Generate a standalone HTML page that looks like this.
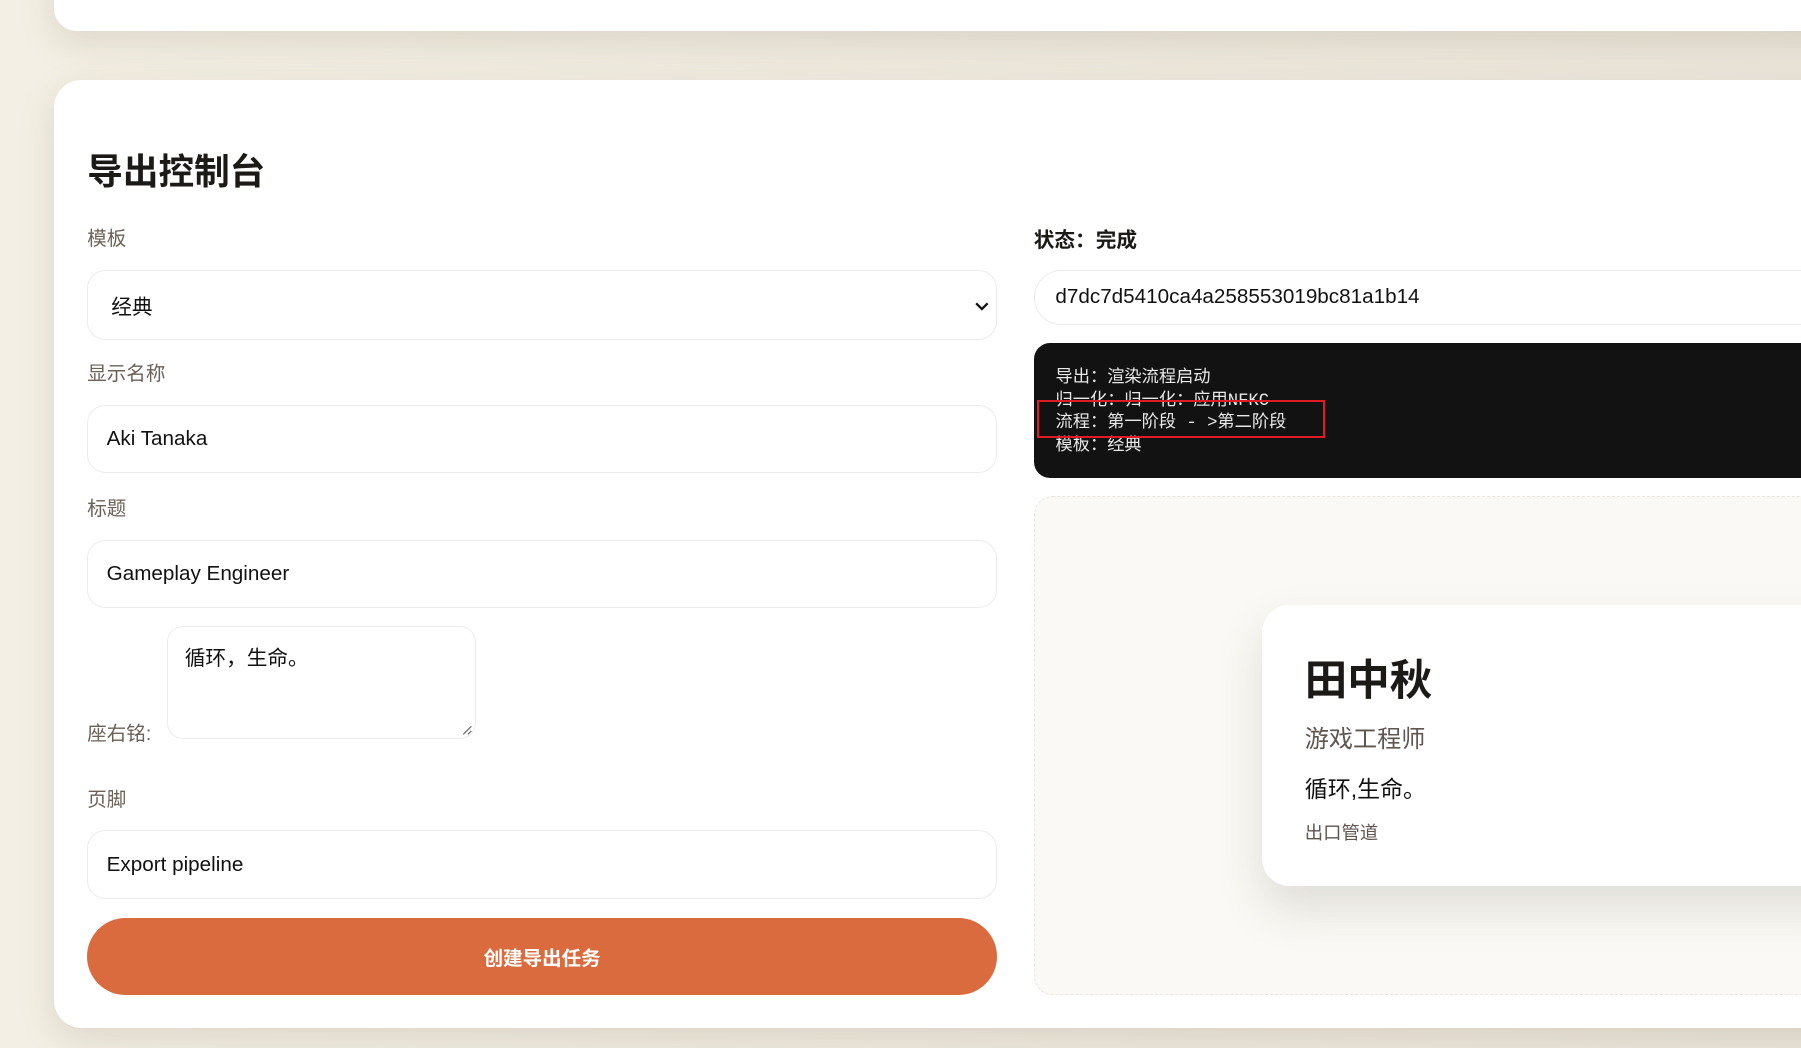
<!DOCTYPE html>
<html><head><meta charset="utf-8"><style>
html,body{margin:0;padding:0;overflow:hidden}
body{width:1801px;height:1048px;background:linear-gradient(90deg,#f4efe4,#ebe5da);font-family:"Liberation Sans","Noto Sans CJK SC",sans-serif;}
#w{zoom:1.14860;width:1568px;height:912px;position:relative;overflow:hidden}
.card{position:absolute;background:#fff;box-shadow:0 10px 30px rgba(120,110,90,.18)}
.lbl{position:absolute;left:76px;font-size:17px;color:#6b6157}
.inp{position:absolute;left:76px;width:792px;border:1px solid #ececec;border-radius:16px;background:#fff;box-sizing:border-box;font-size:18px;color:#111;padding-left:16px;display:flex;align-items:center}
</style></head><body><div id="w">
<div class="card" style="left:47px;top:-40px;width:1600px;height:67px;border-radius:20px"></div>
<div class="card" style="left:47px;top:70px;width:1600px;height:825px;border-radius:24px"></div>
<div style="position:absolute;left:76px;top:125px;font-size:31px;font-weight:bold;color:#1c1a17">导出控制台</div>
<div class="lbl" style="top:193px">模板</div>
<div class="inp" style="top:235px;height:61px;padding-left:20px">经典<svg style="position:absolute;right:6px;top:26px" width="12" height="9" viewBox="0 0 12 9"><path d="M1 2l5 5 5-5" stroke="#111" stroke-width="2" fill="none"/></svg></div>
<div class="lbl" style="top:311px">显示名称</div>
<div class="inp" style="top:353px;height:59px">Aki Tanaka</div>
<div class="lbl" style="top:428px">标题</div>
<div class="inp" style="top:470px;height:59px">Gameplay Engineer</div>
<div class="lbl" style="top:624px">座右铭:</div>
<div style="position:absolute;left:145px;top:545px;width:269px;height:98px;border:1px solid #ececec;border-radius:14px;box-sizing:border-box;padding:12px 15px;font-size:18px;color:#111">循环，生命。<svg style="position:absolute;right:2px;bottom:2px" width="10" height="10"><path d="M9 2L2 9M9 6L6 9" stroke="#666"/></svg></div>
<div class="lbl" style="top:682px">页脚</div>
<div class="inp" style="top:723px;height:60px">Export pipeline</div>
<div style="position:absolute;left:76px;top:799px;width:792px;height:67px;border-radius:34px;background:#d96b3e;color:#fff;font-weight:bold;font-size:17px;display:flex;align-items:center;justify-content:center">创建导出任务</div>
<div style="position:absolute;left:900px;top:194px;font-size:18px;font-weight:bold;color:#1c1a17">状态：完成</div>
<div style="position:absolute;left:900px;top:235px;width:700px;height:48px;border:1px solid #ececec;border-radius:24px;box-sizing:border-box;padding-left:18px;display:flex;align-items:center;font-size:18px;color:#111">d7dc7d5410ca4a258553019bc81a1b14</div>
<div style="position:absolute;left:900px;top:299px;width:700px;height:117px;background:#121212;border-radius:14px;box-sizing:border-box;padding:21px 0 0 19px;font-family:'Liberation Mono','Noto Sans CJK SC',monospace;font-size:15px;line-height:20px;color:#e8e8e8;white-space:pre">导出：渲染流程启动
归一化：归一化：应用NFKC
流程：第一阶段 - >第二阶段
模板：经典</div>
<div style="position:absolute;left:903px;top:348px;width:251px;height:33px;border:2px solid #e01b24;box-sizing:border-box"></div>
<div style="position:absolute;left:900px;top:432px;width:700px;height:434px;background:#faf9f5;border:1px dashed #ece8df;border-radius:16px;box-sizing:border-box"></div>
<div class="card" style="left:1099px;top:527px;width:520px;height:244px;border-radius:24px;box-shadow:0 20px 40px rgba(80,70,50,.15)"></div>
<div style="position:absolute;left:1136px;top:563px;font-size:37px;font-weight:bold;color:#1c1a17">田中秋</div>
<div style="position:absolute;left:1136px;top:626px;font-size:21px;color:#5e564f">游戏工程师</div>
<div style="position:absolute;left:1136px;top:670px;font-size:20px;color:#111">循环,生命。</div>
<div style="position:absolute;left:1136px;top:713px;font-size:16px;color:#5e564f">出口管道</div>
</div></body></html>
